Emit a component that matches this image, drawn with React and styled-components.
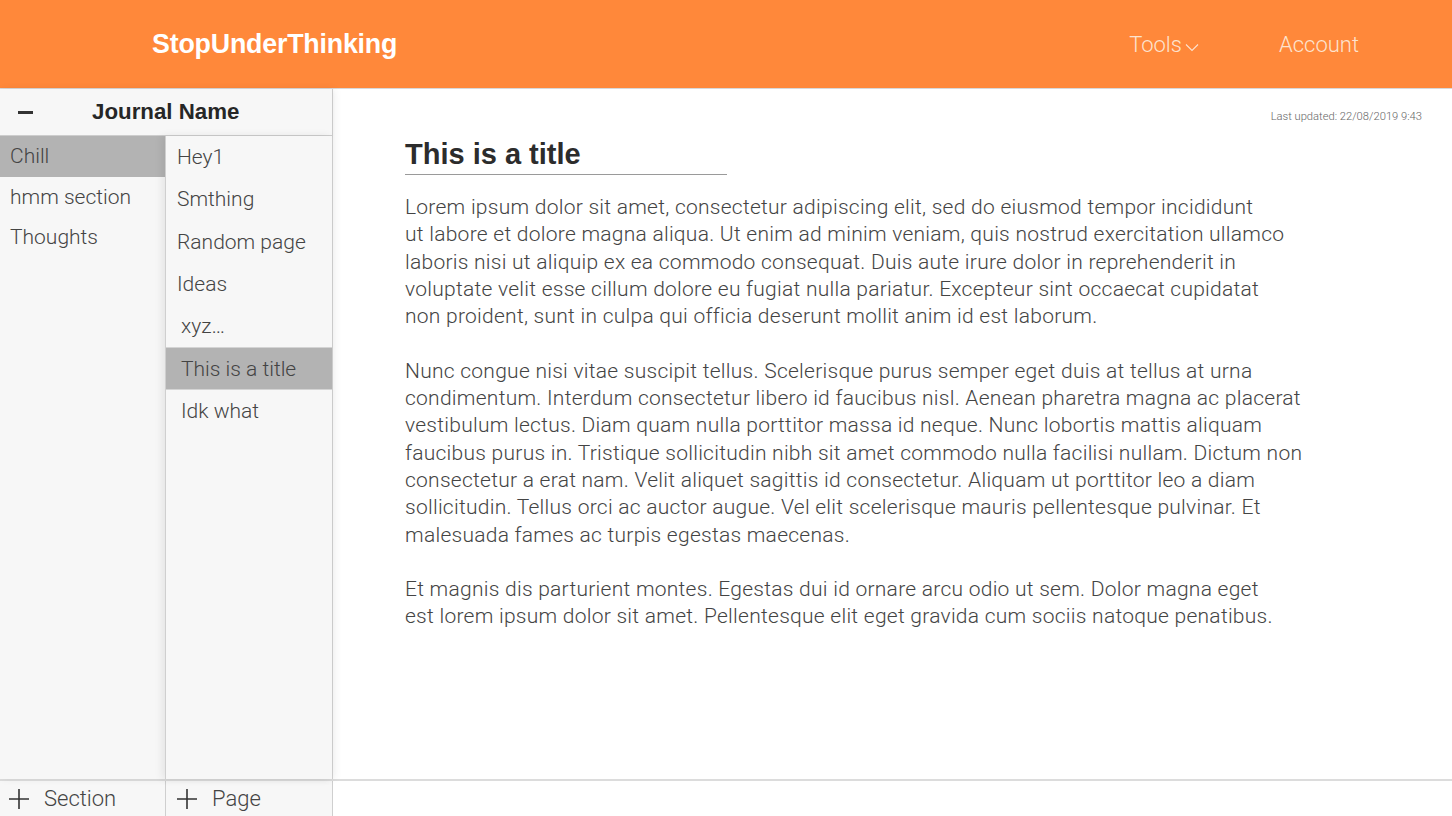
import { createGlobalStyle } from 'styled-components';
import styled from 'styled-components';

const sections = ['Chill', 'hmm section', 'Thoughts'];
const pages = ['Hey1', 'Smthing', 'Random page', 'Ideas', 'xyz…', 'This is a title', 'Idk what'];
const indented = ['xyz…', 'This is a title', 'Idk what'];

const paragraphs = [
  [
    'Lorem ipsum dolor sit amet, consectetur adipiscing elit, sed do eiusmod tempor incididunt',
    'ut labore et dolore magna aliqua. Ut enim ad minim veniam, quis nostrud exercitation ullamco',
    'laboris nisi ut aliquip ex ea commodo consequat. Duis aute irure dolor in reprehenderit in',
    'voluptate velit esse cillum dolore eu fugiat nulla pariatur. Excepteur sint occaecat cupidatat',
    'non proident, sunt in culpa qui officia deserunt mollit anim id est laborum.',
  ],
  [
    'Nunc congue nisi vitae suscipit tellus. Scelerisque purus semper eget duis at tellus at urna',
    'condimentum. Interdum consectetur libero id faucibus nisl. Aenean pharetra magna ac placerat',
    'vestibulum lectus. Diam quam nulla porttitor massa id neque. Nunc lobortis mattis aliquam',
    'faucibus purus in. Tristique sollicitudin nibh sit amet commodo nulla facilisi nullam. Dictum non',
    'consectetur a erat nam. Velit aliquet sagittis id consectetur. Aliquam ut porttitor leo a diam',
    'sollicitudin. Tellus orci ac auctor augue. Vel elit scelerisque mauris pellentesque pulvinar. Et',
    'malesuada fames ac turpis egestas maecenas.',
  ],
  [
    'Et magnis dis parturient montes. Egestas dui id ornare arcu odio ut sem. Dolor magna eget',
    'est lorem ipsum dolor sit amet. Pellentesque elit eget gravida cum sociis natoque penatibus.',
  ],
];

const App = () => {
  return (
    <>
      <GlobalStyle />
      <Page>
        <Header>
          <Logo>StopUnderThinking</Logo>
          <Nav>
            <NavItem>
              Tools
              <svg width='14' height='9' viewBox='0 0 14 9'>
                <path d='M1 1.5 L7 7.5 L13 1.5' fill='none' stroke='#fde3cf' strokeWidth='1.1' />
              </svg>
            </NavItem>
            <NavItem>Account</NavItem>
          </Nav>
        </Header>
        <Body>
          <Sidebar>
            <JournalHeader>
              <Minus />
              <JournalName>Journal Name</JournalName>
            </JournalHeader>
            <Columns>
              <SectionList>
                {sections.map((s, i) => (
                  <SectionRow key={s} $active={i === 0}>
                    {s}
                  </SectionRow>
                ))}
              </SectionList>
              <PageList>
                {pages.map((p) => (
                  <PageRow key={p} $active={p === 'This is a title'} $indent={indented.includes(p)}>
                    {p}
                  </PageRow>
                ))}
              </PageList>
            </Columns>
          </Sidebar>
          <Content>
            <Updated>Last updated: 22/08/2019 9:43</Updated>
            <Article>
              <Title>This is a title</Title>
              {paragraphs.map((lines, i) => (
                <Para key={i}>
                  {lines.map((l, j) => (
                    <Line key={j}>{l}</Line>
                  ))}
                </Para>
              ))}
            </Article>
          </Content>
        </Body>
        <Footer>
          <AddButton>
            <PlusIcon />
            Section
          </AddButton>
          <AddButton $page>
            <PlusIcon />
            Page
          </AddButton>
        </Footer>
      </Page>
    </>
  );
};

export default App;

const PlusIcon = () => (
  <svg width='22' height='22' viewBox='0 0 22 22'>
    <path d='M11 1 V21 M1 11 H21' stroke='#333' strokeWidth='1.6' />
  </svg>
);

const GlobalStyle = createGlobalStyle`
  *, *::before, *::after {
    box-sizing: border-box;
  }
  html, body {
    margin: 0;
    padding: 0;
    height: 100%;
    overflow: hidden;
  }
  body {
    font-family: 'Roboto', 'Liberation Sans', sans-serif;
    background: #fff;
  }
  #root {
    height: 100%;
  }
`;

const Page = styled.div`
  display: flex;
  flex-direction: column;
  height: 816px;
  width: 1452px;
`;

const Header = styled.header`
  flex: 0 0 89px;
  background: #ff883a;
  display: flex;
  align-items: center;
  justify-content: space-between;
  padding: 0 93px 0 152px;
  border-bottom: 1px solid #d8d8d8;
`;

const Logo = styled.div`
  font-family: 'Liberation Sans', Arial, sans-serif;
  font-weight: 700;
  font-size: 26.8px;
  color: #fff;
  letter-spacing: -0.2px;
`;

const Nav = styled.nav`
  display: flex;
  gap: 80px;
`;

const NavItem = styled.div`
  display: flex;
  align-items: center;
  gap: 3px;
  font-weight: 300;
  font-size: 22px;
  color: #fde3cf;

  svg {
    margin-top: 6px;
  }
`;

const Body = styled.div`
  flex: 1;
  display: flex;
  min-height: 0;
`;

const Sidebar = styled.aside`
  width: 333px;
  flex: 0 0 333px;
  display: flex;
  flex-direction: column;
  background: #f7f7f7;
  border-right: 1px solid #cfcfcf;
  box-shadow: 2px 0 8px rgba(0, 0, 0, 0.06);
  z-index: 1;
`;

const JournalHeader = styled.div`
  flex: 0 0 47px;
  display: flex;
  align-items: center;
  border-bottom: 1px solid #cdcdcd;
  box-shadow: 0 1px 4px rgba(0, 0, 0, 0.05);
`;

const Minus = styled.span`
  display: block;
  width: 15px;
  height: 3px;
  background: #333;
  margin: 0 59px 0 18px;
`;

const JournalName = styled.div`
  font-family: 'Liberation Sans', Arial, sans-serif;
  font-weight: 700;
  font-size: 22.3px;
  color: #262626;
`;

const Columns = styled.div`
  flex: 1;
  display: grid;
  grid-template-columns: 165px 1fr;
  min-height: 0;
`;

const SectionList = styled.div`
  display: flex;
  flex-direction: column;
`;

const SectionRow = styled.div`
  height: 40.5px;
  display: flex;
  align-items: center;
  padding-left: 10px;
  font-weight: 300;
  font-size: 21px;
  color: #444;
  background: ${({ $active }) => ($active ? '#b3b3b3' : 'transparent')};
`;

const PageList = styled.div`
  display: flex;
  flex-direction: column;
  border-left: 1px solid #cfcfcf;
  box-shadow: -3px 0 8px rgba(0, 0, 0, 0.08);
  background: #f7f7f7;
`;

const PageRow = styled.div`
  height: 42.3px;
  display: flex;
  align-items: center;
  padding-left: ${({ $indent }) => ($indent ? '15px' : '11px')};
  font-weight: 300;
  font-size: 21px;
  color: #444;
  background: ${({ $active }) => ($active ? '#b3b3b3' : 'transparent')};
  box-shadow: ${({ $active }) => ($active ? 'inset 0 1px 0 #d4d4d4, inset 0 -1px 0 #d4d4d4' : 'none')};
`;

const Content = styled.main`
  flex: 1;
  display: flex;
  flex-direction: column;
  padding: 21px 30px 0 72px;
`;

const Updated = styled.div`
  align-self: flex-end;
  font-size: 11.2px;
  line-height: 13px;
  color: #666;
  font-weight: 300;
`;

const Article = styled.article`
  margin-top: 14px;
`;

const Title = styled.h1`
  margin: 0 0 19px;
  padding: 0 0 3px;
  width: 322px;
  font-family: 'Liberation Sans', Arial, sans-serif;
  font-weight: 700;
  font-size: 29px;
  line-height: 34px;
  color: #2c2c2c;
  border-bottom: 1px solid #9a9a9a;
`;

const Para = styled.p`
  margin: 0 0 27.3px;
  font-weight: 300;
  font-size: 21px;
  letter-spacing: 0.26px;
  line-height: 27.3px;
  color: #444;
`;

const Line = styled.span`
  display: block;
  white-space: nowrap;
`;

const Footer = styled.footer`
  flex: 0 0 37px;
  display: flex;
  border-top: 2px solid #dcdcdc;
  background: #fff;
`;

const AddButton = styled.div`
  width: ${({ $page }) => ($page ? '168px' : '165px')};
  display: flex;
  align-items: center;
  gap: 14px;
  padding-left: ${({ $page }) => ($page ? '10px' : '8px')};
  font-weight: 300;
  font-size: 22px;
  color: #444;
  background: #f7f7f7;
  border-left: ${({ $page }) => ($page ? '1px solid #cfcfcf' : 'none')};
  border-right: ${({ $page }) => ($page ? '1px solid #cfcfcf' : 'none')};
`;
